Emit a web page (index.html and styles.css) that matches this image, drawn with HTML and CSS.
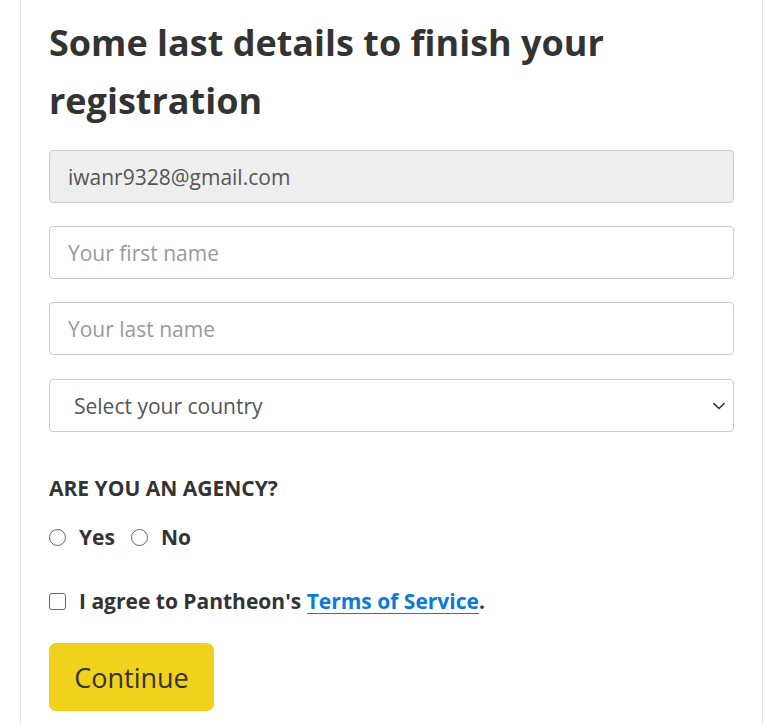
FILE: index.html
```html
<!DOCTYPE html>
<html>
<head>
<meta charset="utf-8">
<link rel="stylesheet" href="styles.css">
</head>
<body>
<div class="card">
  <h1 class="title">Some last details to finish your registration</h1>
  <form class="form">
    <input class="field field-disabled" type="text" value="iwanr9328@gmail.com" disabled>
    <input class="field" type="text" placeholder="Your first name">
    <input class="field field-b" type="text" placeholder="Your last name">
    <div class="select">
      <span class="select-text">Select your country</span>
      <svg class="chevron" width="14" height="8" viewBox="0 0 14 8"><path d="M1.5 1.2 L7 6.5 L12.5 1.2" fill="none" stroke="#333" stroke-width="1.6"/></svg>
    </div>
    <div class="label">ARE YOU AN AGENCY?</div>
    <div class="radios">
      <label class="radio"><span class="radio-dot"></span>Yes</label>
      <label class="radio"><span class="radio-dot"></span>No</label>
    </div>
    <label class="agree"><span class="checkbox"></span>I agree to Pantheon's&nbsp;<a class="link" href="#">Terms of Service</a>.</label>
    <button class="btn" type="button">Continue</button>
  </form>
</div>
</body>
</html>
```
FILE: styles.css
```css
* { box-sizing: border-box; }
html, body { margin: 0; padding: 0; background: #fff; }
body { font-family: "Open Sans", sans-serif; color: #333; }
.card {
  margin-left: 20px;
  width: 743px;
  height: 724px;
  border-left: 1px solid #e3e3e3;
  border-right: 1px solid #e3e3e3;
  padding: 14px 28px 0 28px;
}
.title {
  margin: 0;
  font-size: 36px;
  line-height: 58px;
  font-weight: 700;
  color: #333;
}
.form { display: flex; flex-direction: column; align-items: flex-start; margin-top: 20px; }
.field {
  width: 100%;
  height: 53px;
  border: 1px solid #ccc;
  border-radius: 4px;
  padding: 0 18px;
  font-family: "Open Sans", sans-serif;
  font-size: 21px;
  color: #555;
  background: #fff;
  margin-bottom: 23px;
  outline: none;
}
.field-b { margin-bottom: 24px; }
.field::placeholder { color: #999; }
.field-disabled { background: #eee; color: #555; -webkit-text-fill-color: #555; opacity: 1; }
.select {
  width: 100%;
  height: 53px;
  border: 1px solid #ccc;
  border-radius: 4px;
  padding: 0 7px 0 24px;
  display: flex;
  align-items: center;
  justify-content: space-between;
  font-size: 21px;
  color: #555;
}
.label {
  margin-top: 43px;
  font-size: 21px;
  font-weight: 700;
  line-height: 26px;
  color: #333;
}
.radios { display: flex; gap: 16px; margin-top: 21px; }
.radio { display: flex; align-items: center; font-size: 21px; font-weight: 700; line-height: 30px; }
.radio-dot {
  width: 17px; height: 17px; border: 1px solid #666; border-radius: 50%;
  margin-right: 13px; background: #fff;
}
.agree { display: flex; align-items: center; margin-top: 34px; font-size: 21px; font-weight: 700; line-height: 30px; }
.checkbox {
  width: 17px; height: 17px; border: 1px solid #666; border-radius: 3px;
  margin-right: 13px; background: #fff;
}
.link { color: #0a7bd6; text-decoration: none; border-bottom: 1px solid #0a7bd6; line-height: 24px; }
.btn {
  margin-top: 27px;
  width: 165px;
  height: 68px;
  border: none;
  border-radius: 7px;
  background: #f0d11b;
  color: #333;
  font-family: "Open Sans", sans-serif;
  font-size: 27px;
  padding: 0;
}
```
